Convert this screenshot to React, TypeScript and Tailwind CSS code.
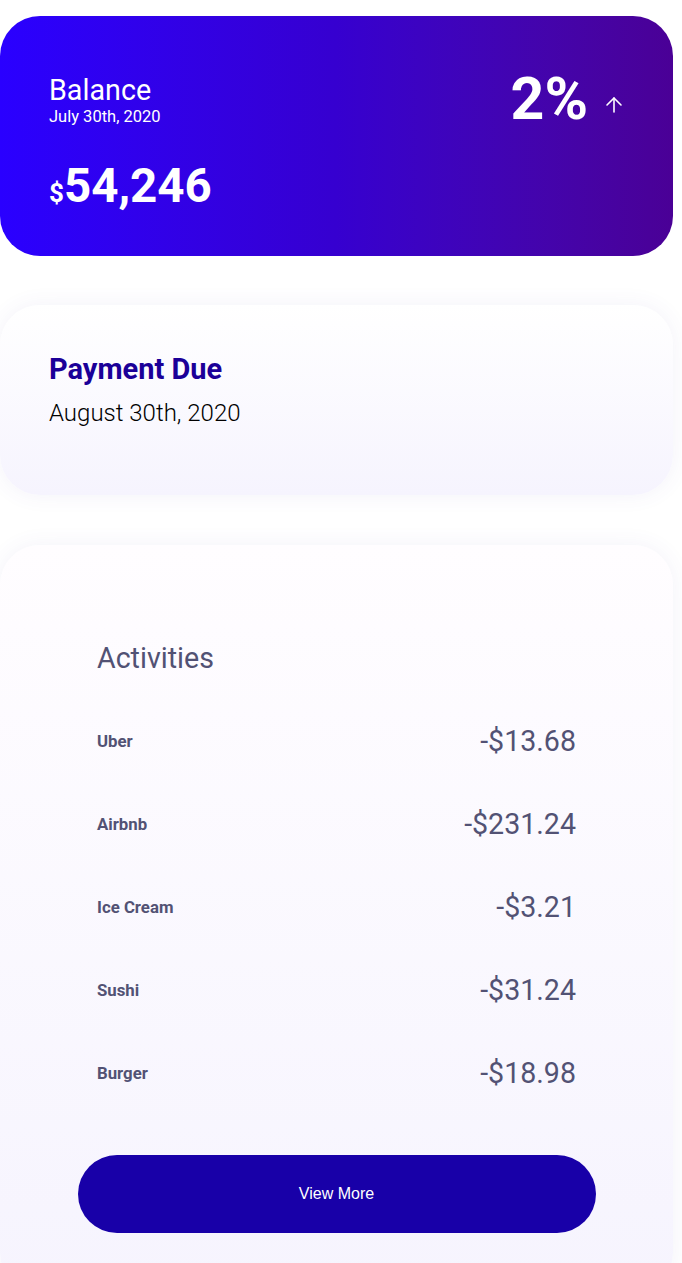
import React from 'react';
import { ArrowUp } from 'lucide-react';

const activities = [
  { name: 'Uber', amount: '-$13.68' },
  { name: 'Airbnb', amount: '-$231.24' },
  { name: 'Ice Cream', amount: '-$3.21' },
  { name: 'Sushi', amount: '-$31.24' },
  { name: 'Burger', amount: '-$18.98' },
];

const BalanceCard = () => (
  <div className="h-[240px] w-[673px] rounded-[40px] bg-gradient-to-r from-[#2a00ff] via-[#3600d0] to-[#4a0096] px-[49px] pt-[58px] text-white">
    <div className="flex items-start justify-between">
      <div className="flex flex-col">
        <span className="text-[28.7px] leading-[32px]">Balance</span>
        <span className="mt-[2px] text-[16.5px] leading-[18px]">July 30th, 2020</span>
      </div>
      <div className="-mr-[2px] -mt-1 flex items-start">
        <span className="text-[59px] font-bold leading-[58px]">2%</span>
        <ArrowUp size={24} strokeWidth={1.6} className="ml-[14px] mt-[23px]" />
      </div>
    </div>
    <div className="mt-[35px] flex items-baseline font-bold">
      <span className="text-[26px] leading-[46px]">$</span>
      <span className="text-[47.5px] leading-[46px]">54,246</span>
    </div>
  </div>
);

const PaymentCard = () => (
  <div className="mt-[49px] h-[190px] w-[673px] rounded-[40px] bg-gradient-to-b from-white to-[#f6f4fe] px-[49px] pt-[48px] shadow-[0_0_22px_rgba(90,70,170,0.07)]">
    <div className="text-[29px] font-bold leading-[33px] text-[#1b0098]">Payment Due</div>
    <div className="mt-[13px] text-[24px] font-light leading-[28px] text-black">August 30th, 2020</div>
  </div>
);

const ActivitiesCard = () => (
  <div className="mt-[50px] w-[673px] rounded-[40px] bg-gradient-to-b from-[#fffdff] to-[#f6f4fe] pb-[60px] pt-[72px] shadow-[0_0_22px_rgba(90,70,170,0.07)]">
    <div className="px-[97px] text-[#525274]">
      <div className="flex h-[83px] items-center text-[28.6px]">Activities</div>
      {activities.map((a) => (
        <div key={a.name} className="flex h-[83px] items-center justify-between">
          <span className="text-[16.8px] font-bold">{a.name}</span>
          <span className="text-[28.6px]">{a.amount}</span>
        </div>
      ))}
    </div>
    <div className="mt-[40px] flex justify-center">
      <button className="h-[78px] w-[518px] rounded-full bg-[#1800a8] text-[16px] text-white [font-family:'Liberation_Sans',Arial,sans-serif]">
        View More
      </button>
    </div>
  </div>
);

export default function App() {
  return (
    <div className="min-h-screen bg-white pt-[16px] [font-family:Roboto,'Noto_Sans',sans-serif]">
      <BalanceCard />
      <PaymentCard />
      <ActivitiesCard />
    </div>
  );
}
